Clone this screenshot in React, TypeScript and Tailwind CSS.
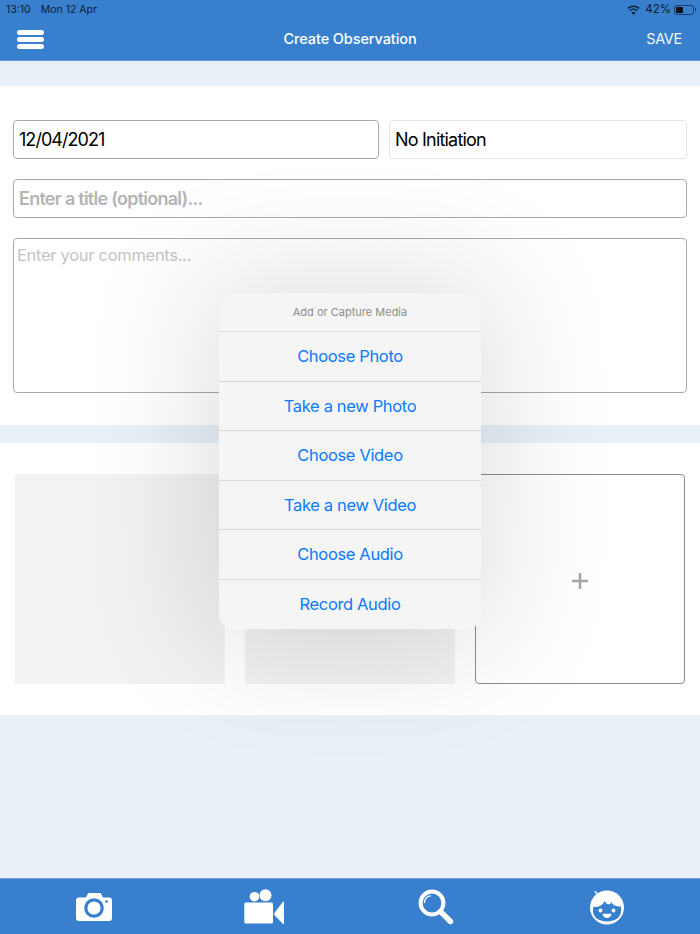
import React from "react";

const font = { fontFamily: '"Inter", "Liberation Sans", sans-serif' };

function Camera() {
  return (
    <svg width="36" height="30" viewBox="0 0 36 30" className="block">
      <path fillRule="evenodd" fill="#fff" d="M3 5.500h7L12 1.500Q12.300 1 13 1h11q.7 0 1 .5l2 4h6q3 0 3 3V26q0 3-3 3H3q-3 0-3-3V8.500q0-3 3-3Z" />
      <circle cx="18" cy="16" r="8.200" fill="#fff" stroke="#3880cd" strokeWidth="3.200" />
      <circle cx="30.500" cy="9.500" r="1.300" fill="#3880cd" />
    </svg>
  );
}

function Video() {
  return (
    <svg width="41" height="36" viewBox="0 0 41 36" className="block">
      <circle cx="10.500" cy="7.700" r="4.800" fill="#fff" />
      <circle cx="21.500" cy="6.300" r="6" fill="#fff" />
      <rect x="0.300" y="13.500" width="28.700" height="21" rx="1.500" fill="#fff" />
      <path d="M30.300 24 39 12.800q1-.8 1 .6v21q0 1.400-1 .7L30.300 26Z" fill="#fff" />
    </svg>
  );
}

function Search() {
  return (
    <svg width="36" height="36" viewBox="0 0 36 36" className="block">
      <circle cx="14" cy="14" r="11.400" fill="none" stroke="#fff" strokeWidth="4" />
      <path d="M6.500 13.500Q7 7.500 12.500 6.800" fill="none" stroke="#fff" strokeWidth="1.300" strokeLinecap="round" />
      <path d="M24 24 32.500 32.500" stroke="#fff" strokeWidth="5.400" strokeLinecap="round" />
    </svg>
  );
}

function Face() {
  return (
    <svg width="36" height="36" viewBox="0 0 36 36" className="block">
      <path d="M5 1.500 8.500 3.500 7 5.500Z" fill="#fff" />
      <circle cx="18" cy="18.500" r="17" fill="#fff" />
      <path d="M4 18C10 18.500 14 16 15.500 12 18 16 21 16.500 22.500 13 24 16.500 27 17.500 32 17.500 V22C32 29 25 32.500 18 32.500 11 32.500 4 29 4 22Z" fill="#3880cd" />
      <circle cx="11.500" cy="21.500" r="1.900" fill="#fff" />
      <circle cx="24.500" cy="21.500" r="1.900" fill="#fff" />
      <path d="M13.500 24.800h9C22 28 20 29 18 29s-4-1-4.500-4.200Z" fill="#fff" />
    </svg>
  );
}

function Wifi() {
  return (
    <svg width="13" height="10" viewBox="0 0 13 10" className="block">
      <path d="M6.500 10 4.500 7.700a3 3 0 0 1 4 0Z" fill="#0b1c33" />
      <path d="M1 3.400a8 8 0 0 1 11 0M2.900 5.600a5.300 5.300 0 0 1 7.200 0" fill="none" stroke="#0b1c33" strokeWidth="1.500" />
    </svg>
  );
}

function Battery() {
  return (
    <div className="flex items-center">
      <div className="w-[20px] h-[10px] rounded-[3px] border border-[#1c3a63] p-[1px] flex">
        <div className="w-[7px] bg-[#07101d] rounded-[1px]" />
      </div>
      <div className="w-[1px] h-[3px] bg-[#1c3a63] ml-[1px]" />
    </div>
  );
}

const actions = ["Choose Photo", "Take a new Photo", "Choose Video", "Take a new Video", "Choose Audio", "Record Audio"];

export default function App() {
  return (
    <div style={font} className="relative w-[700px] h-[934px] overflow-hidden bg-[#e9f0f8] flex flex-col">
      <header className="h-[61px] bg-[#3880cd] shrink-0 border-b border-[#5d97d6]">
        <div className="h-[18px] pt-[1px] flex items-center justify-between pl-[6px] pr-[4px] text-[10.500px] text-[#0b1c33]">
          <div className="flex gap-[10px]">
            <span>13:10</span>
            <span>Mon 12 Apr</span>
          </div>
          <div className="flex items-center gap-[5px]">
            <Wifi />
            <div className="flex items-center gap-[3px]">
              <span className="text-[11.500px]">42%</span>
              <Battery />
            </div>
          </div>
        </div>
        <div className="h-[42px] flex items-center justify-between pl-[17px] pr-[18px]">
          <div className="w-[60px]">
            <div className="flex flex-col gap-[2px] w-[27px]">
              <div className="h-[5px] rounded-full bg-white" />
              <div className="h-[5px] rounded-full bg-white" />
              <div className="h-[5px] rounded-full bg-white" />
            </div>
          </div>
          <div className="text-white text-[14.500px] font-medium tracking-[-0.1px] translate-x-[0.500px]">Create Observation</div>
          <div className="w-[60px] text-right text-[#f2f7fc] text-[14.500px] font-normal tracking-[-0.3px]">SAVE</div>
        </div>
      </header>

      <div className="h-[25px] shrink-0" />

      <section className="h-[339px] shrink-0 bg-white px-[13px] pt-[34px] flex flex-col">
        <div className="flex gap-[10px]">
          <div className="w-[366px] h-[39px] rounded-[4px] border border-[#a9a9a9] flex items-center pl-[5px] text-[18px] tracking-[-0.95px] text-black">
            12/04/2021
          </div>
          <div className="w-[298px] h-[39px] rounded-[4px] border border-[#e4e4e4] flex items-center pl-[5px] text-[18px] tracking-[-0.8px] text-black">
            No Initiation
          </div>
        </div>
        <div className="mt-[20px] h-[39px] rounded-[4px] border border-[#a9a9a9] flex items-center pl-[5px] text-[18px] font-semibold tracking-[-0.75px] text-[#b4b4b4]">
          Enter a title (optional)...
        </div>
        <div className="mt-[20px] h-[155px] rounded-[4px] border border-[#a9a9a9] pl-[3px] pt-[4px] text-[16.500px] tracking-[-0.3px] text-[#c4c4c4]">
          Enter your comments...
        </div>
      </section>

      <div className="h-[18px] shrink-0" />

      <section className="h-[272px] shrink-0 bg-white pl-[15px] pt-[31px] flex gap-[20px]">
        <div className="w-[210px] h-[210px] bg-[#f2f2f2]" />
        <div className="w-[210px] h-[210px] bg-[#f2f2f2]" />
        <div className="w-[210px] h-[210px] rounded-[4px] border border-[#8c8c8c] bg-white flex items-center justify-center pt-[3px]">
          <svg width="18" height="18" viewBox="0 0 18 18" className="block">
            <path d="M9 1v16M1 9h16" stroke="#a6a6a6" strokeWidth="2.500" />
          </svg>
        </div>
      </section>

      <div className="flex-1" />

      <footer className="h-[56px] shrink-0 bg-[#3880cd] border-t border-[#6ea3dc] relative grid grid-cols-4 items-center px-[8px]">
        <div className="flex justify-center"><Camera /></div>
        <div className="flex justify-center"><Video /></div>
        <div className="flex justify-center"><Search /></div>
        <div className="flex justify-center"><Face /></div>
      </footer>

      <div className="absolute left-[219px] top-[293px] w-[262px] h-[336px] rounded-[14px] bg-[#f5f5f5] shadow-[0_0_120px_20px_rgba(0,0,0,0.12)] overflow-hidden flex flex-col">
        <div className="h-[39px] shrink-0 pt-[1px] flex items-center justify-center text-[11px] text-[#8e8e8e] border-b border-[#dcdcdc]">
          Add or Capture Media
        </div>
        {actions.map((a, i) => (
          <div
            key={a}
            className={
              i < actions.length - 1
                ? "h-[49.600px] shrink-0 flex items-center justify-center text-[16.500px] tracking-[-0.35px] text-[#0a7aff] border-b border-[#d8d8d8]"
                : "flex-1 flex items-center justify-center text-[16.500px] tracking-[-0.35px] text-[#0a7aff]"
            }
          >
            {a}
          </div>
        ))}
      </div>
    </div>
  );
}
